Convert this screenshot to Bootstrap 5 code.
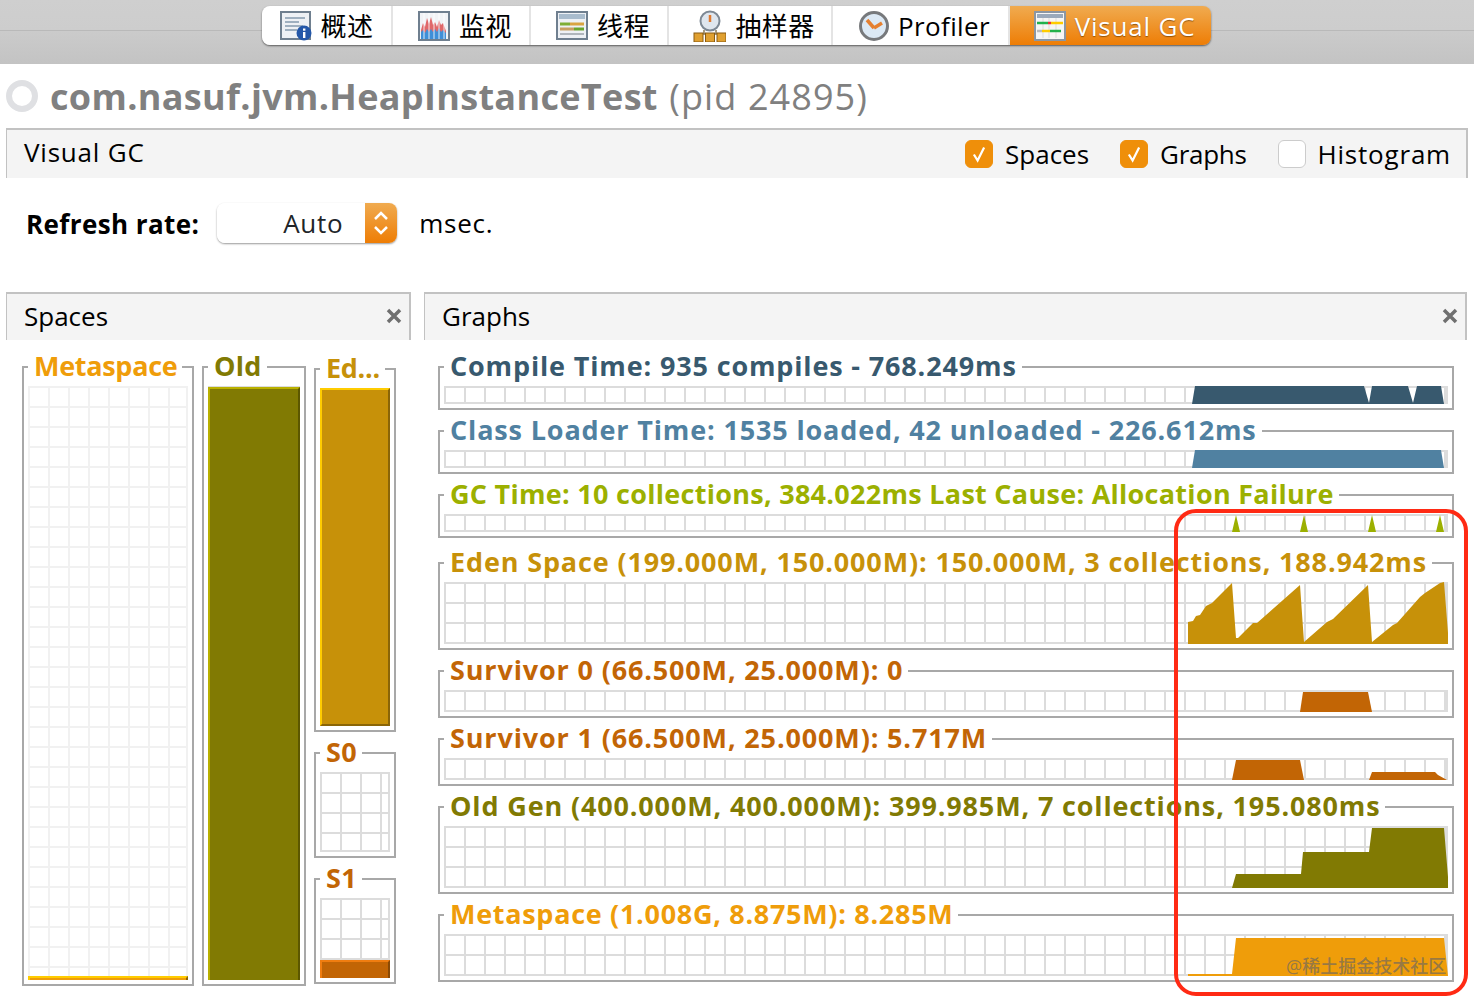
<!DOCTYPE html>
<html lang="zh">

<head>
    <meta charset="UTF-8">
    <meta name="viewport" content="width=device-width, initial-scale=1">
    <title>Visual GC</title>
    <link href="https://cdn.jsdelivr.net/npm/bootstrap@5.3.0/dist/css/bootstrap.min.css" rel="stylesheet">
    <script src="https://cdn.jsdelivr.net/npm/bootstrap@5.3.0/dist/js/bootstrap.bundle.min.js"></script>
    <style>
        body { font-family: "Open Sans", "Noto Sans CJK SC", sans-serif; font-size: 26px; color: #000; background: #fff; overflow: hidden; }
        .page { position: relative; width: 1474px; height: 1004px; overflow: hidden; }

        /* top tabs */
        .topbar { height: 64px; padding-top: 6px; padding-right: 1px; background: linear-gradient(#cfcfcf 0, #cdcdcd 30px, #b9b9b9 30px, #b9b9b9 31px, #cbcbcb 31px, #c3c3c3 64px); }
        .tabs { height: 39px; border-radius: 8px; box-shadow: 0 1px 2px rgba(0,0,0,.55); }
        .tabs .btn { --bs-btn-border-radius: 8px; flex: none; margin: 0 !important; padding: 1px 0 0; height: 39px; border: 0; border-right: 2px solid #e4e4e4; background: #fff; color: #000; font-size: 26px; line-height: 38px; gap: 9px; letter-spacing: .4px; }
        .tabs .btn:last-child { border-right: 0; background: linear-gradient(#f0ab50, #ee7d05); color: #fff; text-shadow: 0 1px 1px rgba(110,60,0,.7); letter-spacing: .8px; }
        .tab-a { width: 131px; } .tab-b { width: 138px; } .tab-c { width: 164px; } .tab-d { width: 177px; } .tab-e { width: 201px; }
        .tabs .tab-b, .tabs .tab-c, .tabs .tab-d, .tabs .tab-e { padding-left: 8px; }

        .app-title { height: 64px; padding-left: 6px; gap: 12px; font-size: 36px; color: #808080; letter-spacing: 1.1px; }
        .app-ring { width: 32px; height: 32px; border: 6px solid #dfe0e3; }
        .app-name { padding-top: 1px; }
        .app-name b { font-weight: 700; letter-spacing: .33px; margin-right: 1px; }

        /* panels */
        .panel-head { background: #f4f4f4; border: solid #c2c2c2; border-width: 2px 2px 0 1px; }
        .view-head { height: 50px; margin: 0 6px; padding: 0 15px 4px 17px; }
        .view-name { letter-spacing: .8px; }
        .view-opts { gap: 31px; padding-top: 4px; }
        .view-opts .form-check { display: flex; align-items: center; gap: 12px; margin: 0; padding: 0; min-height: 0; }
        .view-opts .form-check-input { float: none; margin: 0; width: 28px; height: 28px; border-radius: 6px; border-color: #ccc; }
        .view-opts .form-check-input:checked { background-color: #ef8f0a; border-color: #ef8f0a; --bs-form-check-bg-image: url("data:image/svg+xml,%3csvg xmlns='http://www.w3.org/2000/svg' viewBox='0 0 28 28'%3e%3cpath fill='none' stroke='%23fff' stroke-width='2.4' d='M8.5 14.5l4 6.5 7-14'/%3e%3c/svg%3e"); }
        .label-wide { letter-spacing: .8px; }
        .label-tight { letter-spacing: -.3px; }
        .refresh-row { height: 114px; padding: 25px 0 0 26px; align-items: flex-start; }
        .refresh-row label { font-weight: 700; line-height: 42px; margin-right: 18px; letter-spacing: .4px; }
        .combo { width: 180px; height: 40px; flex-wrap: nowrap; box-shadow: 0 1px 2px rgba(0,0,0,.4); border-radius: 8px; margin-right: 22px; }
        .combo .form-control { padding: 0 22px 0 0; border: 0; border-radius: 8px 0 0 8px; font-size: 26px; line-height: 40px; text-align: right; letter-spacing: .7px; }
        .combo .input-group-text { width: 33px; padding: 0; justify-content: center; border: 0; border-radius: 0 8px 8px 0; background: linear-gradient(#f0ab50, #ee7d05); }
        .msec { line-height: 40px; letter-spacing: .7px; }

        .col-spaces { width: 405px; margin-left: 6px; }
        .col-graphs { width: 1043px; margin-left: 13px; }
        .tool-head { height: 48px; padding: 0 6px 2px 17px; }

        /* titled frames */
        .frame { border: 2px solid #a8a8a8; padding: 0 4px 4px; background: #fff; }
        .frame-title { width: fit-content; margin: -16px 0 6px 0; padding: 0 5px 0 6px; height: 28px; background: #fff; font-size: 27px; font-weight: 700; line-height: 28px; letter-spacing: .85px; white-space: nowrap; }
        .ls-gc { letter-spacing: .28px; }
        .ls-meta { letter-spacing: .7px; }
        .ls-tight { letter-spacing: -.3px; }
        .ls-old { letter-spacing: .3px; }
        .plot { display: block; position: relative; border-right: 2px solid #dcdcdc; border-bottom: 2px solid #dcdcdc; background-image: linear-gradient(#dcdcdc 2px, transparent 2px), linear-gradient(90deg, #dcdcdc 2px, transparent 2px); background-size: 20px 20px; }
        .plot svg { display: block; position: absolute; left: 0; top: 0; }
        .plot-soft { border-color: #f1f1f1; background-image: linear-gradient(#f1f1f1 2px, transparent 2px), linear-gradient(90deg, #f1f1f1 2px, transparent 2px); }
        .plot-bare { border: 0; }
        .plot-open { border-bottom: 0; }

        .space-wrap { padding: 26px 0 0 16px; gap: 8px; }
        .frame-meta { width: 172px; height: 620px; }
        .frame-old { width: 104px; height: 620px; }
        .space-side { width: 82px; gap: 20px; padding-top: 2px; }
        .frame-eden { height: 364px; }
        .frame-s0 { height: 106px; }
        .frame-s1 { height: 106px; }
        .space-plot { flex: 1 1 auto; min-height: 0; }
        .space-fill { width: 100%; border-style: solid; border-width: 2px 2px 0 2px; }
        .frame-s0, .frame-s1, .frame-eden, .frame-old, .frame-meta { display: flex; flex-direction: column; }

        .fill-yellow { background: #ef9d0a; border-color: #ffcc00 #8a6507 #ffcc00 #ffcc00; height: 4px; width: calc(100% + 2px); flex: none; }
        .fill-olive { background: #817a03; border-color: #b9b000 #5c5700 #b9b000 #b9b000; height: calc(100% - 1px); }
        .fill-gold { background: #c79109; border-color: #ffcc00 #8a6507 #8a6507 #ffcc00; border-bottom-width: 2px; height: 100%; }
        .fill-rust { background: #c26505; border-color: #f07d10 #8a4a05 #f07d10 #f07d10; height: 18px; width: calc(100% + 2px); flex: none; }

        .c-meta { color: #ef9d0a; } .c-old { color: #817a03; } .c-eden { color: #c79109; } .c-surv { color: #c26505; }
        .c-compile { color: #38596e; } .c-class { color: #5081a1; } .c-gc { color: #9cb000; }

        .graph-wrap { padding: 26px 0 0 14px; gap: 20px; width: 1030px; }
        .plot-wide { width: 1004px; }
        .h-18 { height: 18px; } .h-22 { height: 22px; } .h-62 { height: 62px; } .h-42 { height: 42px; }

        /* overlays */
        .mark-box { position: absolute; left: 1174px; top: 509px; width: 294px; height: 487px; border: 4px solid #ff2a14; border-radius: 22px; }
        .watermark { position: absolute; left: 1286px; top: 953px; font-size: 18px; font-weight: 500; line-height: 26px; color: rgba(100,100,100,.65); white-space: nowrap; }
    </style>
</head>

<body>
    <div class="page">

        <div class="topbar d-flex justify-content-center">
            <div class="btn-group tabs" role="group">
                <button class="btn tab-a d-flex align-items-center justify-content-center" type="button">
                    <svg width="32" height="30" viewBox="0 0 32 30"><rect x="1" y="1" width="29" height="27" fill="#eef1f5" stroke="#6f7f8f" stroke-width="2"/><path d="M5 7h20M5 11h14M5 15h18M5 19h12" stroke="#9fb0c0" stroke-width="2"/><circle cx="24" cy="22" r="7.5" fill="#2457a8"/><rect x="23" y="21" width="2.4" height="6" fill="#fff"/><rect x="23" y="17.5" width="2.4" height="2.2" fill="#fff"/></svg>
                    <span>概述</span>
                </button>
                <button class="btn tab-b d-flex align-items-center justify-content-center" type="button">
                    <svg width="32" height="30" viewBox="0 0 32 30"><rect x="1" y="1" width="30" height="28" fill="#f1f3f6" stroke="#6f7f8f" stroke-width="2"/><path d="M3 19l2-7 2 4 2-9 2 6 2-7 2 8 2-3 2 5 2-7 2 5 2-2 3 8v2H3z" fill="#e0686a"/><path d="M3 28v-7l2-2 2 3 2-4 2 3 2-3 2 3 2-3 2 3 2-4 2 4 2-2 3 3v6z" fill="#3f8fd8"/><path d="M6 2v26M11 2v26M16 2v26M21 2v26M26 2v26" stroke="#fff" stroke-opacity=".55" stroke-width="1.5"/></svg>
                    <span>监视</span>
                </button>
                <button class="btn tab-b d-flex align-items-center justify-content-center" type="button">
                    <svg width="32" height="30" viewBox="0 0 32 30"><rect x="1" y="1" width="30" height="27" fill="#eef1f5" stroke="#6f7f8f" stroke-width="2"/><rect x="3" y="3" width="26" height="5" fill="#a9bccd"/><path d="M4 13h10" stroke="#7fae35" stroke-width="3"/><path d="M14 13h14" stroke="#d9a441" stroke-width="3"/><path d="M4 18h14" stroke="#c9a063" stroke-width="3"/><path d="M18 18h10" stroke="#6aa52f" stroke-width="3"/><path d="M4 23h24" stroke="#b0b6bc" stroke-width="2"/></svg>
                    <span>线程</span>
                </button>
                <button class="btn tab-c d-flex align-items-center justify-content-center" type="button">
                    <svg width="33" height="32" viewBox="0 0 33 32"><circle cx="17" cy="11" r="9.5" fill="#dfe6ee" stroke="#7d8894" stroke-width="2"/><path d="M17 5v7" stroke="#e07a30" stroke-width="2.5"/><path d="M6 24h22M11 20v4M23 20v4" stroke="#8a7a55" stroke-width="1.5"/><rect x="1" y="23" width="9" height="9" fill="#e0a030" stroke="#8a5a10"/><rect x="12.5" y="23" width="9" height="9" fill="#e0a030" stroke="#8a5a10"/><rect x="24" y="23" width="9" height="9" fill="#e0a030" stroke="#8a5a10"/></svg>
                    <span>抽样器</span>
                </button>
                <button class="btn tab-d d-flex align-items-center justify-content-center" type="button">
                    <svg width="30" height="32" viewBox="0 0 30 32"><circle cx="15" cy="16" r="13.5" fill="#dce9f5" stroke="#77797c" stroke-width="3"/><path d="M15 18L8 10M15 18l8-5" stroke="#e58030" stroke-width="3.5"/></svg>
                    <span>Profiler</span>
                </button>
                <button class="btn tab-e d-flex align-items-center justify-content-center" type="button">
                    <svg width="32" height="30" viewBox="0 0 32 30"><rect x="1" y="1" width="30" height="28" fill="#f6f6f6" stroke="#8b96a2" stroke-width="2"/><rect x="3" y="3" width="26" height="4" fill="#9aa9bb"/><path d="M9 7v20M15 7v20M22 7v20" stroke="#dcdcdc"/><path d="M3 12h11" stroke="#22b14c" stroke-width="2.5"/><path d="M14 12h3" stroke="#e33" stroke-width="2.5"/><path d="M17 12h12" stroke="#ffcc00" stroke-width="2.5"/><path d="M3 20h5" stroke="#bbb" stroke-width="2.5"/><path d="M8 20h8" stroke="#ffcc00" stroke-width="2.5"/><path d="M16 20h11" stroke="#22b14c" stroke-width="2.5"/></svg>
                    <span>Visual GC</span>
                </button>
            </div>
        </div>

        <div class="app-title d-flex align-items-center">
            <div class="app-ring rounded-circle"></div>
            <div class="app-name"><b>com.nasuf.jvm.HeapInstanceTest</b> (pid 24895)</div>
        </div>

        <div class="panel-head view-head d-flex align-items-center justify-content-between">
            <span class="view-name">Visual GC</span>
            <div class="view-opts d-flex align-items-center">
                <div class="form-check"><input class="form-check-input" type="checkbox" id="optSpaces" checked><label for="optSpaces">Spaces</label></div>
                <div class="form-check"><input class="form-check-input" type="checkbox" id="optGraphs" checked><label class="label-tight" for="optGraphs">Graphs</label></div>
                <div class="form-check"><input class="form-check-input" type="checkbox" id="optHisto"><label class="label-wide" for="optHisto">Histogram</label></div>
            </div>
        </div>

        <div class="refresh-row d-flex">
            <label>Refresh rate:</label>
            <div class="input-group combo">
                <span class="form-control">Auto</span>
                <span class="input-group-text">
                    <svg width="18" height="30" viewBox="0 0 18 30"><path d="M3 11l6-6 6 6M3 19l6 6 6-6" fill="none" stroke="#fff" stroke-width="2.5"/></svg>
                </span>
            </div>
            <span class="msec">msec.</span>
        </div>

        <div class="d-flex">
            <div class="col-spaces">
                <div class="panel-head tool-head d-flex align-items-center justify-content-between">
                    <span>Spaces</span>
                    <svg width="18" height="18" viewBox="0 0 18 18"><path d="M3 3l12 12M15 3L3 15" stroke="#6f6f6f" stroke-width="3.5"/></svg>
                </div>
                <div class="space-wrap d-flex align-items-start">
                    <div class="frame frame-meta">
                        <div class="frame-title c-meta ls-tight">Metaspace</div>
                        <div class="plot plot-soft plot-open space-plot d-flex align-items-end">
                            <div class="space-fill fill-yellow"></div>
                        </div>
                    </div>
                    <div class="frame frame-old">
                        <div class="frame-title c-old ls-old">Old</div>
                        <div class="plot plot-bare space-plot d-flex align-items-end">
                            <div class="space-fill fill-olive"></div>
                        </div>
                    </div>
                    <div class="space-side d-flex flex-column">
                        <div class="frame frame-eden">
                            <div class="frame-title c-eden ls-tight">Ed...</div>
                            <div class="plot plot-bare space-plot">
                                <div class="space-fill fill-gold"></div>
                            </div>
                        </div>
                        <div class="frame frame-s0">
                            <div class="frame-title c-surv ls-old">S0</div>
                            <div class="plot space-plot"></div>
                        </div>
                        <div class="frame frame-s1">
                            <div class="frame-title c-surv ls-old">S1</div>
                            <div class="plot plot-open space-plot d-flex align-items-end">
                                <div class="space-fill fill-rust"></div>
                            </div>
                        </div>
                    </div>
                </div>
            </div>

            <div class="col-graphs">
                <div class="panel-head tool-head d-flex align-items-center justify-content-between">
                    <span>Graphs</span>
                    <svg width="18" height="18" viewBox="0 0 18 18"><path d="M3 3l12 12M15 3L3 15" stroke="#6f6f6f" stroke-width="3.5"/></svg>
                </div>
                <div class="graph-wrap d-flex flex-column">
                    <div class="frame">
                        <div class="frame-title c-compile">Compile Time: 935 compiles - 768.249ms</div>
                        <div class="plot plot-wide h-18"><svg width="1004" height="18"><polygon fill="#38596e" points="748,18 751,0 920,0 925,17 928,0 964,0 969,17 973,0 997,0 1000,18"/></svg></div>
                    </div>
                    <div class="frame">
                        <div class="frame-title c-class">Class Loader Time: 1535 loaded, 42 unloaded - 226.612ms</div>
                        <div class="plot plot-wide h-18"><svg width="1004" height="18"><polygon fill="#5081a1" points="748,18 751,0 997,0 1000,18"/></svg></div>
                    </div>
                    <div class="frame">
                        <div class="frame-title c-gc ls-gc">GC Time: 10 collections, 384.022ms Last Cause: Allocation Failure</div>
                        <div class="plot plot-wide h-18"><svg width="1004" height="18"><path fill="#9cb000" d="M788 18l4-17 4 17zM856 18l4-17 4 17zM924 18l4-17 4 17zM992 18l4-17 4 17z"/></svg></div>
                    </div>
                    <div class="frame mt-1">
                        <div class="frame-title c-eden">Eden Space (199.000M, 150.000M): 150.000M, 3 collections, 188.942ms</div>
                        <div class="plot plot-wide h-62"><svg width="1004" height="62"><polygon fill="#c79109" points="744,62 744,40 749,39 752,34 756,33 762,24 768,21 788,1 792,56 794,56 809,41 813,41 856,3 860,60 883,40 889,37 924,3 928,60 949,43 953,41 976,15 981,11 996,1 1000,0 1004,51 1004,62"/></svg></div>
                    </div>
                    <div class="frame">
                        <div class="frame-title c-surv">Survivor 0 (66.500M, 25.000M): 0</div>
                        <div class="plot plot-wide h-22"><svg width="1004" height="22"><polygon fill="#c26505" points="856,22 859,2 924,2 928,22"/></svg></div>
                    </div>
                    <div class="frame">
                        <div class="frame-title c-surv">Survivor 1 (66.500M, 25.000M): 5.717M</div>
                        <div class="plot plot-wide h-22"><svg width="1004" height="22"><path fill="#c26505" d="M788 22l4-20h64l4 20zM925 22l3-8h63l3 3 9 5z"/></svg></div>
                    </div>
                    <div class="frame">
                        <div class="frame-title c-old">Old Gen (400.000M, 400.000M): 399.985M, 7 collections, 195.080ms</div>
                        <div class="plot plot-wide h-62"><svg width="1004" height="62"><polygon fill="#817a03" points="788,62 792,48 857,48 859,26 925,26 928,2 1000,2 1004,51 1004,62"/></svg></div>
                    </div>
                    <div class="frame">
                        <div class="frame-title c-meta ls-meta">Metaspace (1.008G, 8.875M): 8.285M</div>
                        <div class="plot plot-wide h-42"><svg width="1004" height="42"><polygon fill="#ef9d0a" points="744,42 744,40 788,40 792,4 1000,4 1004,42"/></svg></div>
                    </div>
                </div>
            </div>
        </div>

        <div class="mark-box"></div>
        <div class="watermark">@稀土掘金技术社区</div>
    </div>
</body>

</html>
